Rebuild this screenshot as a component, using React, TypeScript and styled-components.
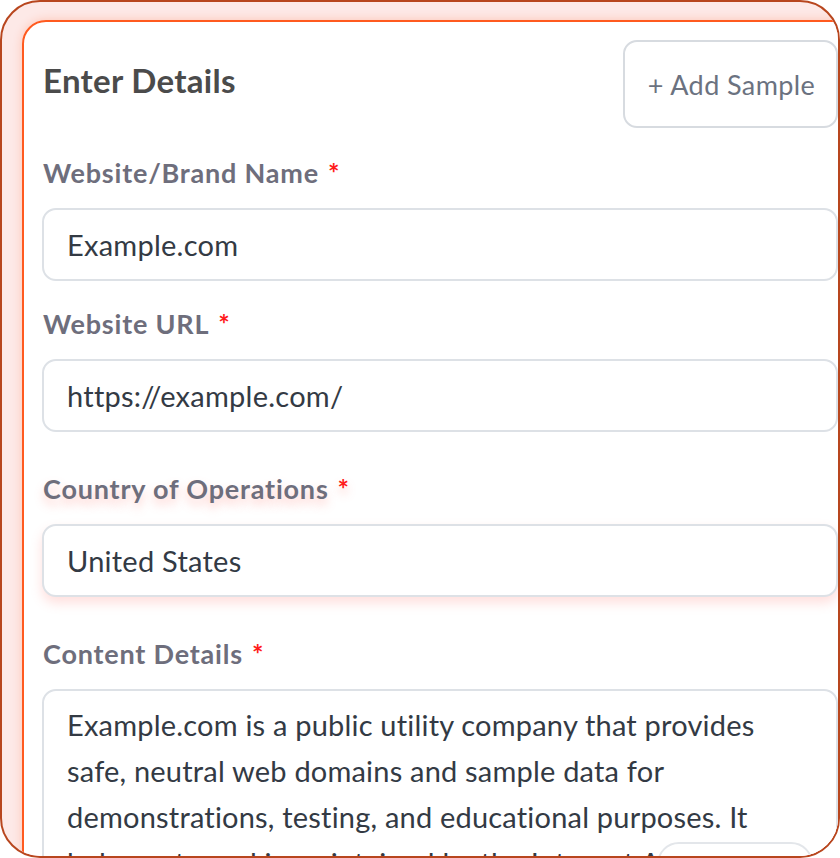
import React from "react";
import styled, { createGlobalStyle } from "styled-components";

const Global = createGlobalStyle`
  html, body { margin: 0; padding: 0; background: #ffffff; }
  body { font-family: "Lato", "Noto Sans", sans-serif; }
  * { box-sizing: border-box; }
`;

const Frame = styled.div`
  width: 840px;
  height: 858px;
  border: 2px solid #b8461e;
  border-radius: 40px;
  background: #fde9e7;
  overflow: hidden;
  padding: 18px 0 0 20px;
`;

const Card = styled.div`
  width: 836px;
  min-height: 900px;
  background: #ffffff;
  border: 2px solid #ff5a1f;
  border-radius: 24px;
  box-shadow: 0 0 10px rgba(255, 90, 31, 0.25);
  padding: 18px 18px 0 18px;
`;

const Header = styled.div`
  display: flex;
  justify-content: space-between;
  align-items: flex-start;
`;

const Title = styled.h2`
  margin: 20px 0 0 1px;
  font-size: 33px;
  line-height: 40px;
  letter-spacing: 0.3px;
  font-weight: 700;
  color: #4b4b4b;
`;

const SampleButton = styled.button`
  width: 215px;
  height: 88px;
  border: 2px solid #d7dbe0;
  border-radius: 14px;
  background: #ffffff;
  font-family: "Lato", "Noto Sans", sans-serif;
  font-size: 27px;
  letter-spacing: 0.4px;
  color: #6b7280;
  padding: 0 0 0 2px;
  display: flex;
  align-items: center;
  justify-content: center;
`;

const Field = styled.div<{ $top: number }>`
  margin-top: ${(p) => p.$top}px;
  position: relative;
`;

const Label = styled.div<{ $glow?: boolean }>`
  font-size: 27px;
  line-height: 32px;
  letter-spacing: 0.8px;
  font-weight: 700;
  color: #6e6e7c;
  margin-left: 1px;
  margin-bottom: 19px;
  text-shadow: ${(p) => (p.$glow ? "0 6px 10px rgba(255, 120, 110, 0.35)" : "none")};
`;

const Star = styled.span`
  color: #ff1a1a;
  margin-left: 9px;
`;

const Input = styled.div<{ $glow?: boolean }>`
  height: 73px;
  border: 2px solid #dde1e6;
  border-radius: 14px;
  background: #ffffff;
  display: flex;
  align-items: center;
  padding: 0 23px;
  font-size: 29px;
  letter-spacing: 0.25px;
  color: #333a44;
  box-shadow: ${(p) => (p.$glow ? "0 6px 12px rgba(255, 110, 100, 0.22)" : "none")};
`;

const TextArea = styled.div`
  height: 240px;
  border: 2px solid #dde1e6;
  border-radius: 14px;
  background: #ffffff;
  padding: 11px 50px 0 23px;
  font-size: 29px;
  letter-spacing: 0.2px;
  line-height: 46px;
  color: #333a44;
`;

const Pill = styled.div`
  position: absolute;
  right: 25px;
  top: 204px;
  width: 156px;
  height: 52px;
  border: 2px solid #e3e6ea;
  border-radius: 22px;
  background: #ffffff;
`;

export default function App() {
  return (
    <>
      <Global />
      <Frame>
        <Card>
          <Header>
            <Title>Enter Details</Title>
            <SampleButton>+ Add Sample</SampleButton>
          </Header>
          <Field $top={29}>
            <Label>
              Website/Brand Name<Star>*</Star>
            </Label>
            <Input>Example.com</Input>
          </Field>
          <Field $top={27}>
            <Label>
              Website URL<Star>*</Star>
            </Label>
            <Input>https://example.com/</Input>
          </Field>
          <Field $top={41}>
            <Label $glow>
              Country of Operations<Star>*</Star>
            </Label>
            <Input $glow>United States</Input>
          </Field>
          <Field $top={41}>
            <Label>
              Content Details<Star>*</Star>
            </Label>
            <TextArea>
              Example.com is a public utility company that provides safe, neutral web domains and
              sample data for demonstrations, testing, and educational purposes. It belongs to and
              is maintained by the Internet Assigned Numbers Authority.
            </TextArea>
            <Pill />
          </Field>
        </Card>
      </Frame>
    </>
  );
}
